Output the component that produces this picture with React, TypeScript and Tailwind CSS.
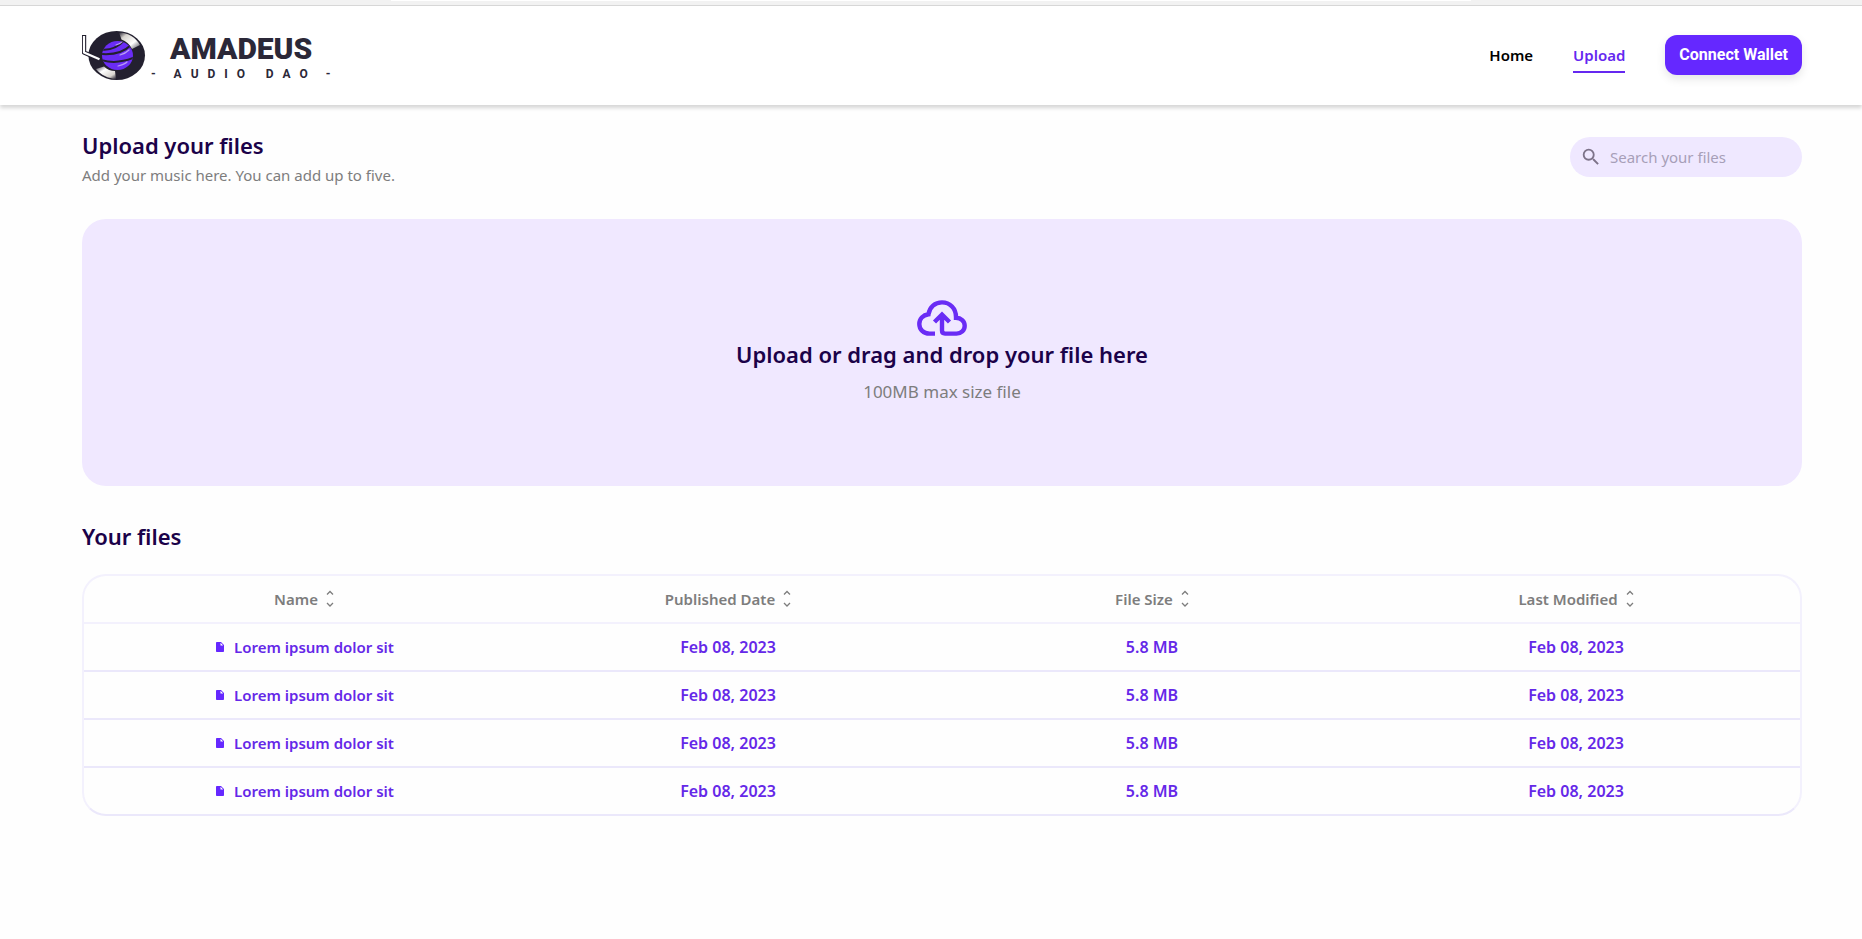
import React from "react";
import { MdSearch, MdInsertDriveFile } from "react-icons/md";

const files = [
  { name: "Lorem ipsum dolor sit", published: "Feb 08, 2023", size: "5.8 MB", modified: "Feb 08, 2023" },
  { name: "Lorem ipsum dolor sit", published: "Feb 08, 2023", size: "5.8 MB", modified: "Feb 08, 2023" },
  { name: "Lorem ipsum dolor sit", published: "Feb 08, 2023", size: "5.8 MB", modified: "Feb 08, 2023" },
  { name: "Lorem ipsum dolor sit", published: "Feb 08, 2023", size: "5.8 MB", modified: "Feb 08, 2023" },
];

const columns = ["Name", "Published Date", "File Size", "Last Modified"];

function Logo() {
  return (
    <svg width="254" height="55" viewBox="0 0 254 55" role="img" aria-label="Amadeus Audio DAO">
      <defs>
        <linearGradient id="shineTop" x1="0" y1="0" x2="1" y2="1">
          <stop offset="0" stopColor="#23202f" />
          <stop offset="0.25" stopColor="#d8d4cf" />
          <stop offset="0.65" stopColor="#ffffff" />
          <stop offset="1" stopColor="#4a4753" />
        </linearGradient>
        <linearGradient id="shineBottom" x1="0" y1="0" x2="1" y2="1">
          <stop offset="0" stopColor="#4a4753" />
          <stop offset="0.35" stopColor="#ffffff" />
          <stop offset="0.75" stopColor="#d8d4cf" />
          <stop offset="1" stopColor="#23202f" />
        </linearGradient>
        <clipPath id="globe">
          <ellipse cx="35.500" cy="27.500" rx="15.500" ry="14.500" />
        </clipPath>
      </defs>
      <ellipse cx="34.700" cy="27.500" rx="28.300" ry="24.500" fill="#23202f" />
      {/* record shine */}
      <path d="M37 4.500c9 0 17 5 21 12.500l-8 4c-2.500-5-6-8-10.500-9.500z" fill="url(#shineTop)" />
      <path d="M14 41c5 6 12 9.500 20 10l-1-8c-4 0-8-1.500-11-4.500z" fill="url(#shineBottom)" />
      <ellipse cx="35.500" cy="27.500" rx="15.500" ry="14.500" fill="#6a2cf5" />
      <g clipPath="url(#globe)" fill="none" strokeLinecap="round">
        <path d="M19 21.500c9 1 18-3 24-10" stroke="#23202f" strokeWidth="2" />
        <path d="M19 26c12 1 23-2 30-9" stroke="#23202f" strokeWidth="2" />
        <path d="M19 32c10 3 22 2 32-2" stroke="#23202f" strokeWidth="2" />
        <path d="M34 17c3-1 5-2 7-4M38 27c4-1 7-3 9-5M36 38c4-1 7-2 9-4" stroke="#b79af5" strokeWidth="1.200" />
      </g>
      {/* tone arm */}
      <path d="M2 7v17.500l16 7" fill="none" stroke="#23202f" strokeWidth="4.400" strokeLinejoin="round" />
      <path d="M2 8v16.500l15.500 6.800" fill="none" stroke="#fff" strokeWidth="2.200" strokeLinejoin="round" />
      <text x="88" y="31" fontFamily="Roboto, sans-serif" fontWeight="900" fontSize="30" fill="#2b2838">AMADEUS</text>
      <text x="69" y="50" fontFamily="Roboto, sans-serif" fontWeight="700" fontSize="12" fill="#2b2838">
        {"-\u00a0\u00a0\u00a0\u00a0\u00a0\u00a0A\u00a0\u00a0\u00a0U\u00a0\u00a0\u00a0D\u00a0\u00a0\u00a0I\u00a0\u00a0\u00a0O\u00a0\u00a0\u00a0\u00a0\u00a0\u00a0\u00a0D\u00a0\u00a0\u00a0A\u00a0\u00a0\u00a0O\u00a0\u00a0\u00a0\u00a0\u00a0\u00a0-"}
      </text>
    </svg>
  );
}

function SortIcon() {
  return (
    <svg width="8" height="18" viewBox="0 0 8 18" fill="none" stroke="#7d7d7d" strokeWidth="1.3">
      <path d="M1 4.500l3-3 3 3M1 13l3 3 3-3" />
    </svg>
  );
}

function Header() {
  return (
    <header className="flex h-[99px] items-center justify-between bg-white pr-[60px] pl-[82px] shadow-[0_3px_4px_rgba(0,0,0,0.16)]">
      <a href="#">
        <Logo />
      </a>
      <nav className="flex items-center gap-10 pb-0.5 font-semibold">
        <a href="#" className="text-black">Home</a>
        <a href="#" className="border-y-2 border-t-transparent border-b-[#6528f0] py-1 text-[#6528f0]">Upload</a>
        <button className="h-10 rounded-xl bg-[#6528ff] px-[14px] font-[Roboto] text-base font-bold text-white shadow-[0_4px_10px_rgba(0,0,0,0.1)]">
          Connect Wallet
        </button>
      </nav>
    </header>
  );
}

function App() {
  return (
    <div className="min-h-screen bg-[#fefefe] font-['Noto_Sans',sans-serif] text-[15px] leading-6">
      <div className="flex h-[6px] justify-center border-b border-[#d8d8d8] bg-[#f2f2f2]">
        <div className="h-px w-[58%] bg-white" />
      </div>
      <Header />
      <main className="pt-6 pr-[60px] pl-[82px]">
        <div className="flex items-start justify-between">
          <div>
            <h1 className="text-[22px] leading-8 font-semibold text-[#1b0249]">Upload your files</h1>
            <p className="leading-7 text-[#7d7d7d]">Add your music here. You can add up to five.</p>
          </div>
          <label className="mt-2 flex h-10 w-[232px] items-center gap-2 rounded-full bg-[#efe8ff] pl-[10px]">
            <MdSearch size={22} color="#7d7389" className="shrink-0" />
            <input
              type="search"
              aria-label="Search your files"
              placeholder="Search your files"
              className="w-full min-w-0 bg-transparent outline-none placeholder:text-[#a79fb8]"
            />
          </label>
        </div>

        <label className="mt-[30px] flex h-[267px] cursor-pointer flex-col items-center justify-center rounded-3xl bg-[#f0e8ff]">
          <svg width="50" height="36" viewBox="0 0 50 36" fill="none" stroke="#6a2cf5" strokeWidth="4.4">
            <path d="M18 33.6h-5.500C6.500 33.600 2.300 29.500 2.300 24c0-5 3.700-9 9.200-9.800C12.500 7 18 2.400 25 2.400c8 0 14 6 14 14.600v.8c5 .2 8.700 3.500 8.700 8 0 4.600-3.600 7.800-8.200 7.800H28q-3 0-3-3V15M17.500 22l7.500-7.500 7.500 7.500" />
          </svg>
          <span className="text-[22px] leading-9 font-semibold text-[#1b0249]">Upload or drag and drop your file here</span>
          <span className="mt-1.5 text-[17px] leading-7 text-[#7d7d7d]">100MB max size file</span>
          <input type="file" className="sr-only" />
        </label>

        <h2 className="mt-[34px] text-[22px] leading-8 font-semibold text-[#1b0249]">Your files</h2>
        <div className="mt-[22px] overflow-hidden rounded-3xl border-2 border-[#f3f1fd] border-b-[#ebe8fb]">
          <table className="block text-center">
            <thead className="block">
              <tr className="grid h-12 grid-cols-4 items-center border-b-2 border-[#f3f1fd] pr-3 pl-2 text-[#7d7d7d]">
                {columns.map((column) => (
                  <th key={column} className="font-semibold">
                    <button className="inline-flex items-center gap-2">
                      {column}
                      <SortIcon />
                    </button>
                  </th>
                ))}
              </tr>
            </thead>
            <tbody className="block font-semibold text-[#6528e8]">
              {files.map((file, i) => (
                <tr
                  key={i}
                  className="grid h-12 grid-cols-4 items-center border-b-2 border-[#ebe8fb] pr-3 pl-2 last:h-[46px] last:border-b-0"
                >
                  <td>
                    <span className="inline-flex items-center gap-2">
                      <MdInsertDriveFile size={12} color="#6528ff" />
                      {file.name}
                    </span>
                  </td>
                  <td className="text-base">{file.published}</td>
                  <td className="text-base">{file.size}</td>
                  <td className="text-base">{file.modified}</td>
                </tr>
              ))}
            </tbody>
          </table>
        </div>
      </main>
    </div>
  );
}

export default App;
